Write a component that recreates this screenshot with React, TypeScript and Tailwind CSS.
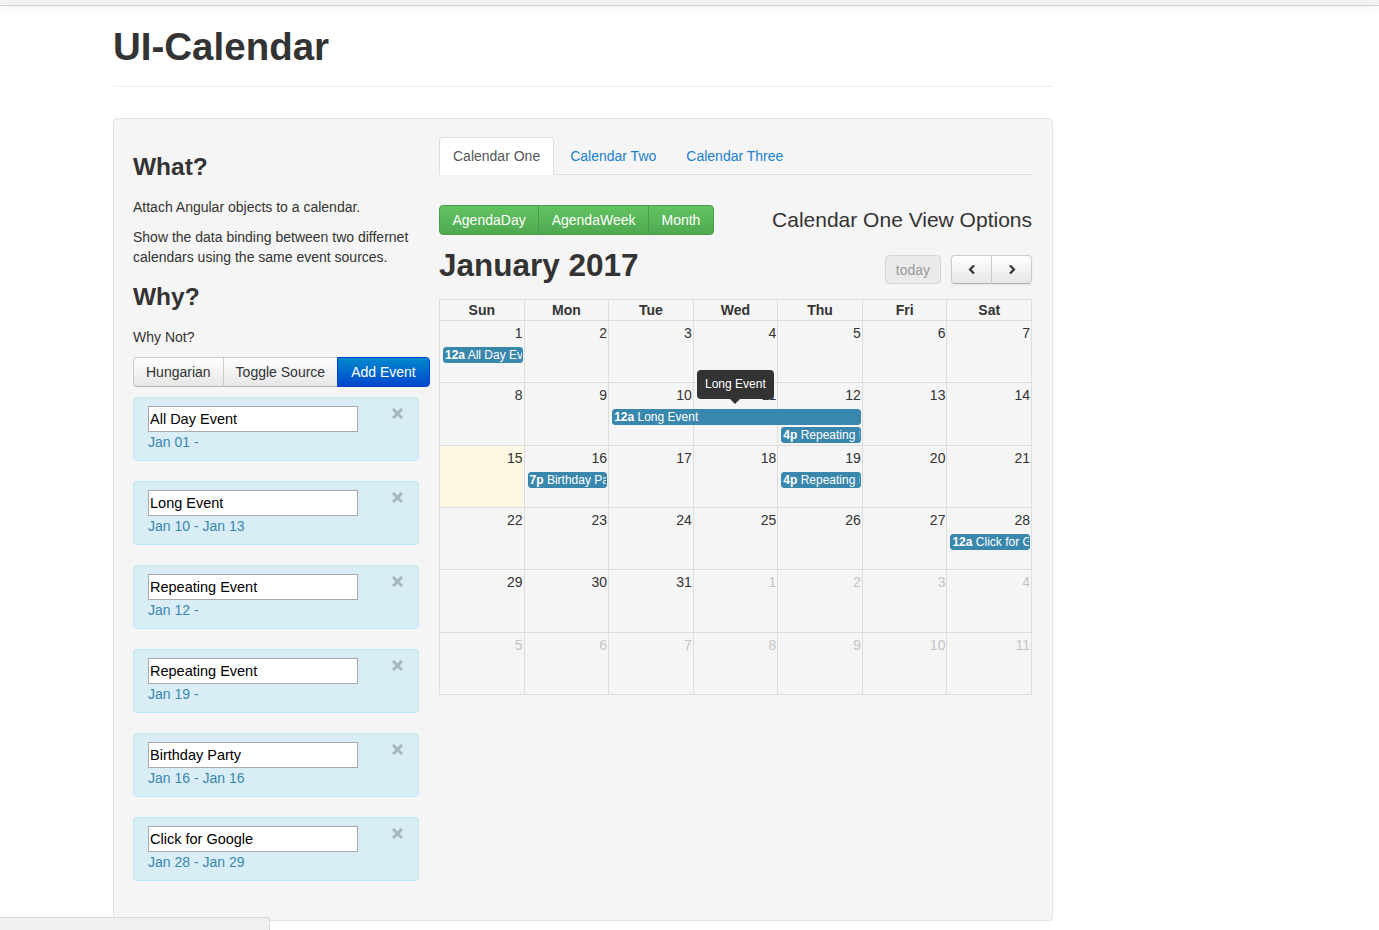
import React from 'react';

const COL_START = ['col-start-1', 'col-start-2', 'col-start-3', 'col-start-4', 'col-start-5', 'col-start-6', 'col-start-7'];
const COL_SPAN = ['col-span-1', 'col-span-2', 'col-span-3'];
const ROW_START = ['row-start-1', 'row-start-2', 'row-start-3'];

type CalEvent = { col: number; span: number; row: number; time: string; title: string };
type Week = { days: number[]; other?: boolean[]; today?: number; events: CalEvent[] };

const WEEKS: Week[] = [
  { days: [1, 2, 3, 4, 5, 6, 7], events: [{ col: 0, span: 1, row: 1, time: '12a', title: 'All Day Event' }] },
  {
    days: [8, 9, 10, 11, 12, 13, 14],
    events: [
      { col: 2, span: 3, row: 1, time: '12a', title: 'Long Event' },
      { col: 4, span: 1, row: 2, time: '4p', title: 'Repeating Event' },
    ],
  },
  {
    days: [15, 16, 17, 18, 19, 20, 21],
    today: 0,
    events: [
      { col: 1, span: 1, row: 1, time: '7p', title: 'Birthday Party' },
      { col: 4, span: 1, row: 1, time: '4p', title: 'Repeating Event' },
    ],
  },
  { days: [22, 23, 24, 25, 26, 27, 28], events: [{ col: 6, span: 1, row: 1, time: '12a', title: 'Click for Google' }] },
  { days: [29, 30, 31, 1, 2, 3, 4], other: [false, false, false, true, true, true, true], events: [] },
  { days: [5, 6, 7, 8, 9, 10, 11], other: [true, true, true, true, true, true, true], events: [] },
];

const EVENTS = [
  { title: 'All Day Event', range: 'Jan 01 -' },
  { title: 'Long Event', range: 'Jan 10 - Jan 13' },
  { title: 'Repeating Event', range: 'Jan 12 -' },
  { title: 'Repeating Event', range: 'Jan 19 -' },
  { title: 'Birthday Party', range: 'Jan 16 - Jan 16' },
  { title: 'Click for Google', range: 'Jan 28 - Jan 29' },
];

const DAYS = ['Sun', 'Mon', 'Tue', 'Wed', 'Thu', 'Fri', 'Sat'];

const CloseIcon = () => (
  <svg width="11" height="11" viewBox="0 0 11 11" className="shrink-0 mt-[1px]">
    <path d="M2 2 L9 9 M9 2 L2 9" stroke="#a9b6bd" strokeWidth="3" strokeLinecap="square" />
  </svg>
);

const Chevron = ({ dir }: { dir: 'left' | 'right' }) => (
  <svg width="8" height="11" viewBox="0 0 8 11">
    <path
      d={dir === 'left' ? 'M6 1.5 L2 5.5 L6 9.5' : 'M2 1.5 L6 5.5 L2 9.5'}
      stroke="#333"
      strokeWidth="2.2"
      fill="none"
    />
  </svg>
);

const WeekRow = ({ week }: { week: Week }) => (
  <div className="grid grid-cols-7 grid-rows-[26px_18px_18px_1fr] min-h-0">
    {week.days.map((d, i) => (
      <div
        key={'c' + i}
        className={`${COL_START[i]} row-span-full border-r border-b border-[#ddd] ${week.today === i ? 'bg-[#fcf8e3]' : ''}`}
      />
    ))}
    {week.days.map((d, i) => (
      <div
        key={'n' + i}
        className={`${COL_START[i]} row-start-1 z-10 text-right pr-[2px] pt-[2px] leading-[20px] text-[14px] ${
          week.other && week.other[i] ? 'text-[#c4c4c4]' : 'text-[#333]'
        }`}
      >
        {d}
      </div>
    ))}
    {week.events.map((e, i) => (
      <div
        key={'e' + i}
        className={`${COL_START[e.col]} ${COL_SPAN[e.span - 1]} ${ROW_START[e.row]} z-10 ml-[3px] mr-[2px] h-[16px] overflow-hidden whitespace-nowrap rounded-[3px] border border-[#3a87ad] bg-[#3a87ad] px-[1px] text-[12px] leading-[14px] text-white`}
      >
        <span className="font-bold">{e.time}</span> {e.title}
      </div>
    ))}
  </div>
);

const App: React.FC = () => {
  return (
    <div className="min-h-[930px] bg-white font-['Liberation_Sans',Arial,sans-serif] text-[14px] text-[#333]">
      {/* top bar */}
      <div className="h-[6px] bg-[#f2f2f2] border-b border-[#d2d2d2] shadow-[0_2px_8px_rgba(0,0,0,0.08)]" />

      <div className="ml-[113px] w-[940px]">
        {/* page header */}
        <div className="pt-[21px] pb-[19px] border-b border-[#eee]">
          <h1 className="text-[38.5px] font-bold leading-[40px]">UI-Calendar</h1>
        </div>

        {/* well */}
        <div className="mt-[31px] rounded-[4px] border border-[#e3e3e3] bg-[#f5f5f5] px-[19px] pt-[18px] pb-[19px] flex gap-[20px]">
          {/* left column */}
          <div className="w-[286px] shrink-0">
            <h3 className="mt-[10px] mb-[10px] text-[24.5px] font-bold leading-[40px]">What?</h3>
            <p className="mb-[10px] leading-[20px]">Attach Angular objects to a calendar.</p>
            <p className="mb-[10px] leading-[20px]">
              Show the data binding between two differnet calendars using the same event sources.
            </p>
            <h3 className="mb-[10px] text-[24.5px] font-bold leading-[40px]">Why?</h3>
            <p className="mb-[10px] leading-[20px]">Why Not?</p>
            <div className="mb-[10px] flex w-max whitespace-nowrap">
              <button className="h-[30px] rounded-l-[4px] border border-[#ccc] border-b-[#b3b3b3] bg-linear-to-b from-white to-[#e6e6e6] px-[12px] leading-[20px] text-[#333]">
                Hungarian
              </button>
              <button className="-ml-px h-[30px] border border-[#ccc] border-b-[#b3b3b3] bg-linear-to-b from-white to-[#e6e6e6] px-[12px] leading-[20px] text-[#333]">
                Toggle Source
              </button>
              <button className="-ml-px h-[30px] rounded-r-[4px] border border-[#0044cc] bg-linear-to-b from-[#0088cc] to-[#0044cc] px-[13px] leading-[20px] text-white">
                Add Event
              </button>
            </div>
            {EVENTS.map((ev, i) => (
              <div
                key={i}
                className="mb-[20px] flex rounded-[4px] border border-[#bce8f1] bg-[#d9edf7] pt-[8px] pb-[8px] pl-[14px] pr-[15px]"
              >
                <div>
                  <input
                    readOnly
                    value={ev.title}
                    className="block h-[26px] w-[210px] border border-[#a9a9a9] bg-white px-[1px] text-[14.5px] text-black outline-none"
                  />
                  <div className="leading-[20px] text-[#3a87ad]">{ev.range}</div>
                </div>
                <div className="ml-auto pt-[1px]">
                  <CloseIcon />
                </div>
              </div>
            ))}
          </div>

          {/* right column */}
          <div className="w-[593px] shrink-0">
            {/* tabs */}
            <div className="flex border-b border-[#ddd]">
              <div className="-mb-px rounded-t-[4px] border border-[#ddd] border-b-transparent bg-white px-[13px] py-[8px] leading-[20px] text-[#555]">
                Calendar One
              </div>
              <div className="-mb-px ml-[2px] border border-transparent px-[13px] py-[8px] leading-[20px] text-[#1a7fd0]">
                Calendar Two
              </div>
              <div className="-mb-px ml-[2px] border border-transparent px-[13px] py-[8px] leading-[20px] text-[#1a7fd0]">
                Calendar Three
              </div>
            </div>

            {/* view options */}
            <div className="mt-[30px] flex items-center justify-between">
              <div className="flex">
                {['AgendaDay', 'AgendaWeek', 'Month'].map((b, i) => (
                  <button
                    key={b}
                    className={`h-[30px] border border-[#4a9a4a] bg-linear-to-b from-[#62c462] to-[#4fa84f] px-[12.5px] leading-[20px] text-white ${
                      i === 0 ? 'rounded-l-[4px]' : '-ml-px'
                    } ${i === 2 ? 'rounded-r-[4px]' : ''}`}
                  >
                    {b}
                  </button>
                ))}
              </div>
              <div className="text-[21px] leading-[30px]">Calendar One View Options</div>
            </div>

            {/* fc header */}
            <div className="mt-[10px] mb-[14px] flex items-start justify-between">
              <h2 className="text-[31.5px] font-bold leading-[40px]">January 2017</h2>
              <div className="mt-[10px] flex gap-[10px]">
                <button className="h-[29px] rounded-[4px] border border-[#d6d6d6] bg-[#eaeaea] px-[10px] leading-[20px] text-[#999]">
                  today
                </button>
                <div className="flex shadow-[0_1px_2px_rgba(0,0,0,0.08)]">
                  <button className="flex h-[29px] w-[41px] items-center justify-center rounded-l-[4px] border border-[#ccc] border-b-[#b3b3b3] bg-linear-to-b from-white to-[#e6e6e6]">
                    <Chevron dir="left" />
                  </button>
                  <button className="-ml-px flex h-[29px] w-[41px] items-center justify-center rounded-r-[4px] border border-[#ccc] border-b-[#b3b3b3] bg-linear-to-b from-white to-[#e6e6e6]">
                    <Chevron dir="right" />
                  </button>
                </div>
              </div>
            </div>

            {/* calendar grid */}
            <div className="border-l border-t border-[#ddd]">
              <div className="grid grid-cols-7">
                {DAYS.map((d) => (
                  <div key={d} className="border-r border-b border-[#ddd] text-center font-bold leading-[20px]">
                    {d}
                  </div>
                ))}
              </div>
              <div className="relative grid h-[374px] grid-rows-6">
                {WEEKS.map((w, i) => (
                  <WeekRow key={i} week={w} />
                ))}
                {/* tooltip */}
                <div className="absolute left-[257px] top-[49px] z-20 flex flex-col items-center">
                  <div className="rounded-[4px] bg-[#333] px-[8px] py-[4px] text-[12px] leading-[21px] text-white">
                    Long Event
                  </div>
                  <div className="h-0 w-0 border-x-[5px] border-t-[5px] border-x-transparent border-t-[#333]" />
                </div>
              </div>
            </div>
          </div>
        </div>
      </div>

      {/* bottom-left bar */}
      <div className="fixed bottom-0 left-0 h-[13px] w-[270px] rounded-tr-[3px] border-t border-r border-[#d8d8d8] bg-[#f0f0f0]" />
    </div>
  );
};

export default App;
